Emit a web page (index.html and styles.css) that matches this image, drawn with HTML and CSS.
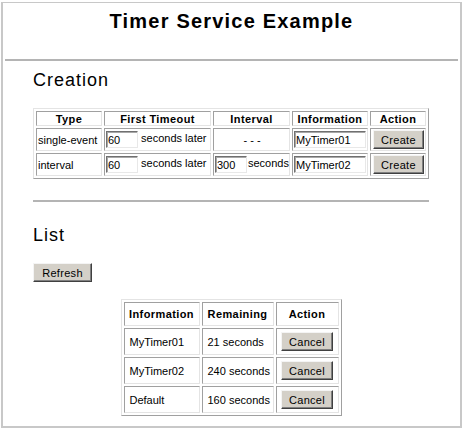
FILE: index.html
```html
<!DOCTYPE html>
<html lang="en">
<head>
  <meta charset="UTF-8" />
  <title>Timer Service Example</title>
  <link rel="stylesheet" href="styles.css">
</head>
<body>
  <div class="frame">
    <h1>Timer Service Example</h1>
    <hr class="rule top-rule">

    <div class="content">
      <!-- Creation -->
      <h2>Creation</h2>
      <table class="grid create">
        <tr>
          <th class="c-type">Type</th>
          <th class="c-first">First Timeout</th>
          <th class="c-int">Interval</th>
          <th class="c-info">Information</th>
          <th class="c-act">Action</th>
        </tr>
        <tr>
          <td>single-event</td>
          <td><input type="text" class="num" value="60"> seconds later</td>
          <td class="center">- - -</td>
          <td><input type="text" class="info" value="MyTimer01"></td>
          <td class="center"><button class="btn">Create</button></td>
        </tr>
        <tr>
          <td>interval</td>
          <td><input type="text" class="num" value="60"> seconds later</td>
          <td><input type="text" class="num short" value="300">seconds</td>
          <td><input type="text" class="info" value="MyTimer02"></td>
          <td class="center"><button class="btn">Create</button></td>
        </tr>
      </table>

      <hr class="rule mid-rule">

      <!-- List -->
      <h2 class="list-title">List</h2>
      <button class="btn refresh">Refresh</button>

      <table class="grid list">
        <tr>
          <th class="l-info">Information</th>
          <th class="l-rem">Remaining</th>
          <th class="l-act">Action</th>
        </tr>
        <tr>
          <td>MyTimer01</td>
          <td>21 seconds</td>
          <td class="center"><button class="btn">Cancel</button></td>
        </tr>
        <tr>
          <td>MyTimer02</td>
          <td>240 seconds</td>
          <td class="center"><button class="btn">Cancel</button></td>
        </tr>
        <tr>
          <td>Default</td>
          <td>160 seconds</td>
          <td class="center"><button class="btn">Cancel</button></td>
        </tr>
      </table>
    </div>
  </div>
</body>
</html>
```

FILE: styles.css
```css
/* General */
body {
  margin: 0;
  padding: 2px 0 0 1px;
  font-family: 'Liberation Sans', Arial, sans-serif;
  font-size: 11px;
  color: #000;
  background: #fff;
}

.frame {
  width: 457px;
  height: 423px;
  border: 1px solid #c8c8c8;
  border-width: 1px 2px 2px 2px;
}

h1 {
  margin: 0;
  padding-top: 7px;
  height: 31px;
  text-align: center;
  font-size: 20px;
  font-weight: 700;
  letter-spacing: 1.2px;
}

.rule {
  height: 0;
  border: none;
  border-top: 2px solid #b4b4b4;
  margin: 0;
}

.top-rule {
  margin: 18px 2px 0 2px;
}

.content {
  margin-left: 30px;
  width: 396px;
}

h2 {
  margin: 9px 0 0 0;
  height: 38px;
  font-size: 18px;
  font-weight: 400;
  letter-spacing: 1px;
}

/* Tables */
.grid {
  border-collapse: separate;
  border-spacing: 2px;
  border: 1px solid;
  border-color: #e4e4e4 #a0a0a0 #a0a0a0 #e4e4e4;
}

.grid th,
.grid td {
  box-sizing: border-box;
  border: 1px solid;
  border-color: #a0a0a0 #e4e4e4 #e4e4e4 #a0a0a0;
  padding: 0 0 0 1px;
  white-space: nowrap;
  text-align: left;
}

.grid th {
  font-weight: 700;
  text-align: center;
  letter-spacing: 0.4px;
  padding: 0;
}

.grid .center {
  text-align: center;
}

.create {
  width: 396px;
  table-layout: fixed;
}

.create th {
  height: 15px;
}

.create td {
  height: 23px;
}

.c-type { width: 66px; }
.c-first { width: 107px; }
.c-int { width: 77px; }
.c-info { width: 76px; }
.c-act { width: 56px; }

input {
  font-family: 'Liberation Sans', Arial, sans-serif;
  font-size: 11px;
  height: 17px;
  box-sizing: border-box;
  padding: 0 1px;
  border: 1px solid;
  border-color: #707070 #e8e8e8 #e8e8e8 #707070;
  box-shadow: inset 1px 1px 0 #a8a8a8;
  vertical-align: middle;
}

.num {
  width: 32px;
}

.num.short {
  margin-right: 1px;
}

.info {
  width: 72px;
}

.btn {
  font-family: 'Liberation Sans', Arial, sans-serif;
  font-size: 11px;
  height: 19px;
  padding: 0 6px;
  background: #d4d0c8;
  border: 1px solid;
  border-color: #f4f4f4 #404040 #404040 #f4f4f4;
  box-shadow: inset -1px -1px 0 #808080;
  color: #000;
  letter-spacing: 0.3px;
}

.create .btn {
  width: 51px;
}

.mid-rule {
  margin-top: 21px;
}

.list-title {
  margin-top: 23px;
}

.refresh {
  width: 59px;
  display: block;
}

.list {
  margin: 17px auto 0 auto;
  width: 221px;
  table-layout: fixed;
}

.list th {
  height: 24px;
}

.list td {
  height: 27px;
  padding: 0 0 0 5px;
}

.list td.center {
  padding: 0;
}

.l-info { width: 76px; }
.l-rem { width: 72px; }
.l-act { width: 63px; }

.list .btn {
  width: 52px;
}
```
